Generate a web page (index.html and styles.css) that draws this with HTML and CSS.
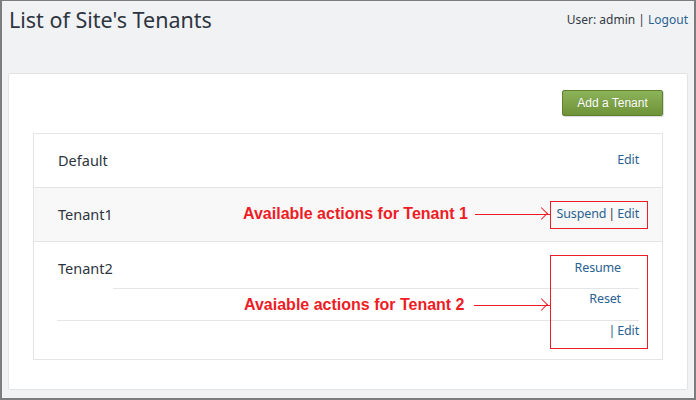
FILE: index.html
```html
<!DOCTYPE html>
<html>
<head>
<meta charset="utf-8">
<link rel="stylesheet" href="styles.css">
</head>
<body>
<div class="frame">
  <header class="topbar">
    <h1 class="title">List of Site's Tenants</h1>
    <div class="user">User: admin | <a class="link" href="#">Logout</a></div>
  </header>
  <main class="panel">
    <div class="toolbar">
      <button class="btn-add">Add a Tenant</button>
    </div>
    <div class="list">
      <div class="row">
        <span class="name">Default</span>
        <span class="actions"><a class="link" href="#">Edit</a></span>
      </div>
      <div class="row row-alt">
        <span class="name">Tenant1</span>
        <span class="actions"><a class="link" href="#">Suspend</a> | <a class="link" href="#">Edit</a></span>
      </div>
      <div class="row row-multi">
        <div class="sub sub-first">
          <span class="name">Tenant2</span>
          <div class="cell cell-top"><a class="link" href="#">Resume</a></div>
        </div>
        <div class="cell cell-mid"><a class="link" href="#">Reset</a></div>
        <div class="cell cell-last">| <a class="link" href="#">Edit</a></div>
      </div>

      <div class="note note-1">Available actions for Tenant 1</div>
      <div class="arrow arrow-1"></div>
      <div class="hl hl-1"></div>
      <div class="note note-2">Avaiable actions for Tenant 2</div>
      <div class="arrow arrow-2"></div>
      <div class="hl hl-2"></div>
    </div>
  </main>
</div>
</body>
</html>
```

FILE: styles.css
```css
html, body {
  margin: 0;
  padding: 0;
}
body {
  width: 696px;
  height: 400px;
  overflow: hidden;
  font-family: "Noto Sans", "Open Sans", sans-serif;
  color: #333a45;
}
.frame {
  box-sizing: border-box;
  width: 696px;
  height: 400px;
  background: #f1f2f4;
  border: 2px solid #7d7d7d;
  border-top-width: 1px;
  padding: 0 6px;
  display: flex;
  flex-direction: column;
}
.topbar {
  height: 72px;
  display: flex;
  justify-content: space-between;
  align-items: flex-start;
}
.title {
  margin: 4px 0 0 1px;
  font-weight: 400;
  font-size: 21.5px;
  line-height: 30px;
  color: #2d3540;
}
.user {
  margin-top: 10px;
  font-size: 12px;
  line-height: 18px;
}
.link {
  color: #2a6292;
  text-decoration: none;
}
.panel {
  box-sizing: border-box;
  width: 680px;
  height: 317px;
  background: #fff;
  border: 1px solid #e2e3e5;
  border-radius: 2px;
  padding: 16px 24px 0 24px;
}
.toolbar {
  display: flex;
  justify-content: flex-end;
  margin-bottom: 17px;
}
.btn-add {
  box-sizing: border-box;
  width: 101px;
  height: 26px;
  border: 1px solid #5f7f31;
  border-radius: 2px;
  background: linear-gradient(#8db35a, #6e9338);
  color: #fff;
  font-family: "Liberation Sans", Arial, sans-serif;
  font-size: 12px;
  padding: 0;
  text-shadow: 0 0 1px rgba(0,0,0,0.15);
  box-shadow: 1px 1px 1px rgba(0,0,0,0.15);
}
.list {
  position: relative;
  border: 1px solid #e5e5e5;
  font-size: 14.5px;
  line-height: 20px;
}
.row {
  display: flex;
  justify-content: space-between;
  align-items: center;
  padding: 16px 23px 17px 24px;
}
.row + .row {
  border-top: 1px solid #e5e5e5;
}
.row-alt {
  background: #f8f8f8;
}
.name {
  color: #2d3540;
}
.actions, .cell {
  font-size: 12.5px;
  letter-spacing: -0.15px;
  word-spacing: -1px;
  color: #333a45;
}
.row-multi {
  display: block;
  padding: 16px 23px 18px 23px;
}
.sub-first {
  display: flex;
}
.sub-first .name {
  padding-left: 1px;
}
.cell {
  text-align: right;
  padding-right: 18px;
}
.cell-top {
  flex: 1;
  padding-bottom: 10px;
  border-bottom: 1px solid #e5e5e5;
}
.cell-mid {
  padding-bottom: 11px;
  border-bottom: 1px solid #e5e5e5;
}
.cell-last {
  padding-right: 0;
  color: #2a6292;
}
.note {
  position: absolute;
  font-family: "Liberation Sans", Arial, sans-serif;
  font-weight: 700;
  font-size: 16px;
  line-height: 20px;
  color: #ee1c25;
  white-space: nowrap;
}
.note-1 { left: 209px; top: 70px; }
.note-2 { left: 210px; top: 161px; }
.arrow {
  position: absolute;
  height: 1px;
  background: #ee1c25;
}
.arrow::after {
  content: "";
  position: absolute;
  right: 0;
  top: -5px;
  width: 8px;
  height: 8px;
  border-top: 1px solid #ee1c25;
  border-right: 1px solid #ee1c25;
  transform: translateX(-4px) rotate(45deg);
}
.arrow-1 { left: 441px; width: 75px; top: 80px; }
.arrow-2 { left: 440px; width: 76px; top: 171px; }
.hl {
  position: absolute;
  border: 1px solid #ee1c25;
  box-sizing: border-box;
}
.hl-1 { left: 516px; top: 67px; width: 98px; height: 28px; }
.hl-2 { left: 516px; top: 121px; width: 98px; height: 94px; }
```
